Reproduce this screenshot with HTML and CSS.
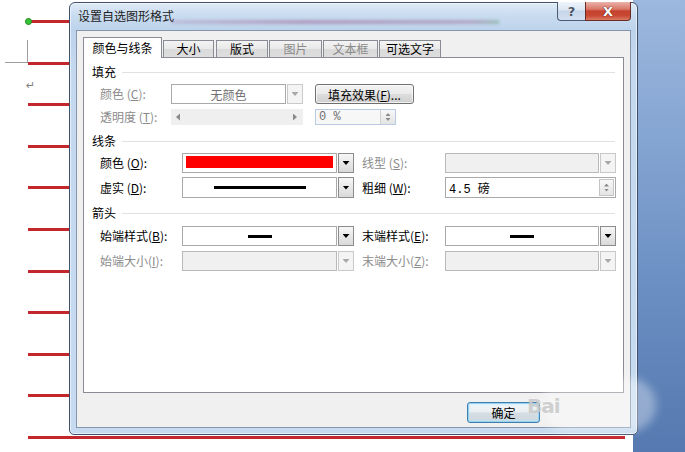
FILE: index.html
```html
<!DOCTYPE html>
<html lang="zh-CN">
<head>
<meta charset="utf-8">
<title>设置自选图形格式</title>
<link rel="stylesheet" href="styles.css">
</head>
<body>
<div class="screen">
  <div class="doc">
    <div class="corner"></div>
    <div class="ret">↵</div>
    <div class="doc-lines">
      <div class="rline"><span class="handle"></span></div>
      <div class="rline"></div>
      <div class="rline"></div>
      <div class="rline"></div>
      <div class="rline"></div>
      <div class="rline"></div>
      <div class="rline"></div>
      <div class="rline"></div>
      <div class="rline"></div>
      <div class="rline"></div>
      <div class="rline long"></div>
    </div>
  </div>
  <div class="desk"></div>
</div>

<div class="dialog">
  <div class="titlebar">
    <span class="title">设置自选图形格式</span>
    <span class="streak"></span>
    <div class="caps">
      <span class="cap help">?</span>
      <span class="cap close">X</span>
    </div>
  </div>
  <div class="client">
    <div class="tabs">
      <span class="tab active">颜色与线条</span>
      <span class="tab t-size">大小</span>
      <span class="tab t-layout">版式</span>
      <span class="tab t-pic off">图片</span>
      <span class="tab t-box off">文本框</span>
      <span class="tab t-alt">可选文字</span>
    </div>
    <div class="panel">
      <div class="sec"><span>填充</span><i class="sep"></i></div>
      <div class="frow fr1">
        <span class="lbl dis">颜色 (<u>C</u>):</span>
        <div class="combo">
          <div class="field center distext">无颜色</div>
          <div class="dd off"><i class="tri"></i></div>
        </div>
        <span></span>
        <span class="btn">填充效果(<u>F</u>)...</span>
      </div>
      <div class="frow fr2">
        <span class="lbl dis">透明度 (<u>T</u>):</span>
        <div class="slider"><i class="al"></i><i class="ar"></i></div>
        <span></span>
        <div class="spin"><span class="spin-val">0 %</span><div class="spin-btn"><i class="up"></i><i class="down"></i></div></div>
      </div>

      <div class="sec s2"><span>线条</span><i class="sep"></i></div>
      <div class="lrow lr1">
        <span class="lbl">颜色 (<u>O</u>):</span>
        <div class="combo">
          <div class="field pad"><div class="swatch"></div></div>
          <div class="dd"><i class="tri"></i></div>
        </div>
        <span></span>
        <span class="lbl dis">线型 (<u>S</u>):</span>
        <div class="combo disabled">
          <div class="field"></div>
          <div class="dd off"><i class="tri"></i></div>
        </div>
      </div>
      <div class="lrow lr2">
        <span class="lbl">虚实 (<u>D</u>):</span>
        <div class="combo">
          <div class="field center"><i class="stroke long"></i></div>
          <div class="dd"><i class="tri"></i></div>
        </div>
        <span></span>
        <span class="lbl">粗细 (<u>W</u>):</span>
        <div class="spinbox">
          <span class="spin-val dark">4.5 磅</span>
          <div class="spin-btn"><i class="up"></i><i class="down"></i></div>
        </div>
      </div>

      <div class="sec s3"><span>箭头</span><i class="sep"></i></div>
      <div class="lrow lr3">
        <span class="lbl">始端样式(<u>B</u>):</span>
        <div class="combo">
          <div class="field center"><i class="stroke short"></i></div>
          <div class="dd"><i class="tri"></i></div>
        </div>
        <span></span>
        <span class="lbl">末端样式(<u>E</u>):</span>
        <div class="combo">
          <div class="field center"><i class="stroke short"></i></div>
          <div class="dd"><i class="tri"></i></div>
        </div>
      </div>
      <div class="lrow lr4">
        <span class="lbl dis">始端大小(<u>I</u>):</span>
        <div class="combo disabled">
          <div class="field"></div>
          <div class="dd off"><i class="tri"></i></div>
        </div>
        <span></span>
        <span class="lbl dis">末端大小(<u>Z</u>):</span>
        <div class="combo disabled">
          <div class="field"></div>
          <div class="dd off"><i class="tri"></i></div>
        </div>
      </div>
    </div>
    <div class="footer">
      <span class="okbtn">确定</span>
    </div>
  </div>
</div>

<div class="wm-blob"></div>
<div class="wm-text">Bai</div>
</body>
</html>
```

FILE: styles.css
```css
* { box-sizing: border-box; margin: 0; padding: 0; }
html, body { width: 685px; height: 452px; overflow: hidden; background: #fff; }
body {
  position: relative;
  font: 12px "Noto Sans CJK SC", "Noto Sans", sans-serif;
  color: #000;
}
u { text-decoration: underline; text-underline-offset: 1px; }

/* ---------- background document ---------- */
.screen { display: flex; width: 685px; height: 452px; }
.doc {
  flex: 0 0 633px;
  position: relative;
  background: #fff;
  padding: 20px 0 0 28px;
}
.doc-lines { display: flex; flex-direction: column; gap: 38.6px; }
.rline { position: relative; width: 42px; height: 3px; background: #c3262b; }
.rline.long { width: 597px; }
.handle {
  position: absolute; left: -3px; top: -2px;
  width: 7px; height: 7px; border-radius: 50%;
  background: #37c237; border: 1px solid #1d8a1d;
}
.corner {
  position: absolute; left: 5px; top: 40px;
  width: 23px; height: 23px;
  border-right: 1px solid #9c9c9c; border-bottom: 1px solid #9c9c9c;
}
.ret {
  position: absolute; left: 26px; top: 79px;
  font: 11px "DejaVu Sans", sans-serif; color: #808080;
}
.desk {
  flex: 1;
  background: linear-gradient(180deg, #9db8de 0%, #85a5d2 30%, #6a8ec2 65%, #5579b0 100%);
}

/* ---------- dialog window ---------- */
.dialog {
  position: absolute; left: 69px; top: 2px;
  width: 569px; height: 433px;
  border: 1px solid #3f5169;
  border-radius: 6px 6px 5px 5px;
  background: linear-gradient(180deg, #dfeaf6 0, #c9dcf0 12px, #bdd3ec 27px, #c4d8ee 60px, #c7dbf0 100%);
  padding: 0 6px 6px;
  display: flex; flex-direction: column;
  box-shadow: inset 0 0 0 1px rgba(255,255,255,0.55);
}
.titlebar { height: 27px; display: flex; align-items: flex-start; }
.title { margin: 5px 0 0 2px; line-height: 16px; color: #222; white-space: nowrap; }
.streak {
  width: 328px; height: 4px; margin: 17px 0 0 -3px;
  background: linear-gradient(90deg, rgba(160,90,140,0.2), rgba(150,85,135,0.45) 40%, rgba(150,95,140,0.4) 92%, rgba(100,150,110,0.4));
  filter: blur(1.5px);
}
.caps { margin-left: auto; margin-top: -1px; display: flex; }
.cap {
  height: 19px; border: 1px solid #4b5c73; border-top: none;
  display: flex; align-items: center; justify-content: center;
}
.help {
  width: 28px; border-right: none; border-radius: 0 0 0 4px;
  background: linear-gradient(180deg, #eff4fa 0%, #dae5f2 45%, #c6d6ea 50%, #d2e0f0 100%);
  font: bold 13px "DejaVu Sans", sans-serif; color: #4a5566;
  text-shadow: 0 0 1px #fff;
}
.close {
  width: 46px; border-radius: 0 0 4px 0; border-color: #6b2c25;
  background: linear-gradient(180deg, #ebb3aa 0%, #d97868 40%, #c6412f 50%, #c74833 75%, #dc7b63 100%);
  font: bold 13px "DejaVu Sans", sans-serif; color: #fff;
  text-shadow: 0 0 1px #5a1a10, 0 0 1px #5a1a10;
}

.client {
  flex: 1;
  background: #f0f0f0;
  border: 1px solid #8596ac;
  padding: 6px 6px 0;
  display: flex; flex-direction: column;
}

/* tabs */
.tabs { height: 20px; display: flex; align-items: flex-end; position: relative; z-index: 1; }
.tab {
  height: 17px; line-height: 16px; text-align: center;
  border: 1px solid #898c95; border-bottom: none;
  background: linear-gradient(180deg, #f3f3f3 0%, #e9e9e9 50%, #dadada 52%, #dedede 100%);
  margin-left: 1px; white-space: nowrap;
}
.tab.off { color: #8a8a8a; }
.tab.active {
  width: 79px; height: 21px; line-height: 20px;
  margin: 0 0 -1px 0; background: #fff;
}
.t-size { width: 51px; }
.t-layout { width: 52px; margin-left: 2px; }
.t-pic { width: 53px; }
.t-box { width: 55px; }
.t-alt { width: 62px; }

.panel {
  height: 336px;
  background: #fff;
  border: 1px solid #898c95;
  padding: 6px 8px 0;
}
.sec { height: 16px; display: flex; align-items: center; line-height: 16px; }
.sep { flex: 1; height: 1px; background: #dfe2e5; margin-left: 6px; }
.s2 { margin-top: 8px; }
.s3 { margin-top: 7px; }

.lbl { white-space: nowrap; line-height: 16px; }
.lbl.dis { color: #8b8b8b; }

.frow {
  display: grid; grid-template-columns: 71px 132px 12px 99px;
  margin-left: 8px; align-items: center;
}
.fr1 { height: 20px; margin-top: 4px; }
.fr2 { height: 16px; margin-top: 5px; }

.lrow {
  display: grid; grid-template-columns: 82px 172px 8px 83px 171px;
  margin-left: 8px; align-items: center;
}
.lr1 { height: 20px; margin-top: 4px; }
.lr2 { height: 21px; margin-top: 4px; }
.lr3 { height: 20px; margin-top: 5px; }
.lr4 { height: 20px; margin-top: 5px; }

/* combo boxes */
.combo { height: 100%; display: flex; }
.field {
  flex: 1; border: 1px solid #a9a9a9; background: #fff;
  display: flex; align-items: center;
}
.field.center { justify-content: center; }
.field.pad { padding: 2px 3px 4px 3px; align-items: stretch; }
.distext { color: #707070; }
.swatch { flex: 1; background: #ff0000; }
.dd {
  width: 16px; margin-left: 1px;
  border: 1px solid #8c8c8c;
  background: linear-gradient(180deg, #f7f7f7 0%, #e8e8e8 50%, #d9d9d9 100%);
  display: flex; align-items: center; justify-content: center;
}
.tri {
  width: 7px; height: 4px; background: #000;
  clip-path: polygon(0 0, 100% 0, 50% 100%);
}
.dd.off { border-color: #c9c9c9; background: #f4f4f4; }
.dd.off .tri { background: #a8a8a8; }
.combo.disabled .field { background: #f0f0f0; border-color: #b9b9b9; }

.stroke { display: block; background: #000; }
.stroke.long { width: 92px; height: 3px; }
.stroke.short { width: 24px; height: 3px; }

/* slider */
.slider {
  height: 100%; background: #efefef;
  display: flex; align-items: center; justify-content: space-between;
  padding: 0 6px 0 5px;
}
.al, .ar { width: 4px; height: 7px; background: #8a8a8a; }
.al { clip-path: polygon(100% 0, 100% 100%, 0 50%); }
.ar { clip-path: polygon(0 0, 0 100%, 100% 50%); }

/* spinners */
.spin {
  width: 81px; height: 100%;
  border: 1px solid #b8cbe2; background: #f7f7f7;
  display: flex; align-items: center;
}
.spinbox {
  height: 100%; border: 1px solid #a9a9a9; background: #fff;
  display: flex; align-items: center;
}
.spin-val { flex: 1; padding-left: 3px; color: #707070; font: 12px "Liberation Mono", "Noto Sans CJK SC", monospace; }
.spin-val.dark { color: #000; }
.spin-btn {
  width: 15px; height: 100%;
  border-left: 1px solid #d0d0d0;
  display: flex; flex-direction: column; align-items: center; justify-content: center; gap: 2px;
  background: linear-gradient(180deg, #f8f8f8, #e4e4e4);
}
.spinbox .spin-btn { border: 1px solid #c6c6c6; margin: 1px; height: auto; align-self: stretch; }
.up, .down { width: 5px; height: 3px; background: #8a8a8a; }
.up { clip-path: polygon(50% 0, 100% 100%, 0 100%); }
.down { clip-path: polygon(0 0, 100% 0, 50% 100%); }

/* buttons */
.btn {
  height: 100%; border: 1px solid #707070; border-radius: 3px;
  background: linear-gradient(180deg, #f2f2f2 0%, #ebebeb 48%, #dddddd 52%, #cfcfcf 100%);
  display: flex; align-items: center; justify-content: center;
  white-space: nowrap; box-shadow: inset 0 0 0 1px rgba(255,255,255,0.7);
}
.footer { display: flex; justify-content: flex-end; padding: 9px 84px 0 0; }
.okbtn {
  width: 73px; height: 21px;
  border: 1px solid #3c7fb1; border-radius: 3px;
  background: linear-gradient(180deg, #f4f8fa 0%, #e8eef2 48%, #d6dee4 52%, #cdd6dc 100%);
  box-shadow: inset 0 0 0 1px #98d2ee, inset 0 0 3px 1px #bfe6f7;
  display: flex; align-items: center; justify-content: center;
}

/* watermark overlay */
.wm-blob {
  position: absolute; left: 541px; top: 378px;
  width: 115px; height: 54px; border-radius: 27px;
  background: rgba(255,255,255,0.35);
  filter: blur(4px);
}
.wm-text {
  position: absolute; left: 527px; top: 393px;
  font: bold 20px "DejaVu Sans", sans-serif; color: rgba(200,200,200,0.85);
  letter-spacing: -1px; line-height: 26px;
}
```
